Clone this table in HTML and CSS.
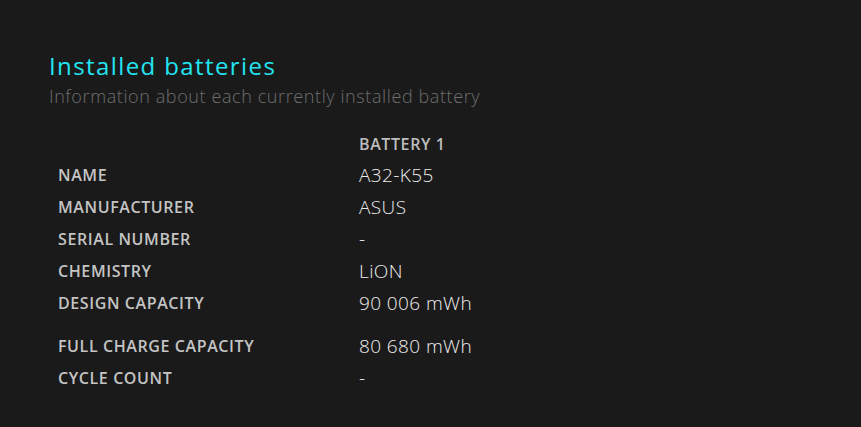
FILE: index.html
```html
<!DOCTYPE html>
<html>
<head>
<meta charset="utf-8">
<link rel="stylesheet" href="styles.css">
</head>
<body>
<main class="page">
  <h1 class="title">Installed batteries</h1>
  <p class="subtitle">Information about each currently installed battery</p>
  <div class="table">
    <div class="row head"><span class="label"></span><span class="colhead">BATTERY 1</span></div>
    <div class="row"><span class="label">NAME</span><span class="value">A32-K55</span></div>
    <div class="row"><span class="label">MANUFACTURER</span><span class="value">ASUS</span></div>
    <div class="row"><span class="label">SERIAL NUMBER</span><span class="value">-</span></div>
    <div class="row"><span class="label">CHEMISTRY</span><span class="value">LiON</span></div>
    <div class="row"><span class="label">DESIGN CAPACITY</span><span class="value">90 006 mWh</span></div>
    <div class="row gap"><span class="label">FULL CHARGE CAPACITY</span><span class="value">80 680 mWh</span></div>
    <div class="row"><span class="label">CYCLE COUNT</span><span class="value">-</span></div>
  </div>
</main>
</body>
</html>
```

FILE: styles.css
```css
html, body {
  margin: 0;
  padding: 0;
  background: #1a1a1a;
  height: 100%;
}
body {
  font-family: "Open Sans", "Noto Sans", sans-serif;
}
.page {
  padding: 49px 0 0 49px;
}
.title {
  margin: 0;
  font-size: 24px;
  font-weight: 400;
  letter-spacing: 1.4px;
  line-height: 34px;
  color: #22e4f2;
}
.subtitle {
  margin: 0;
  font-size: 18px;
  font-weight: 300;
  letter-spacing: 0.6px;
  line-height: 26px;
  color: #6e6e6e;
}
.table {
  display: flex;
  flex-direction: column;
  padding: 19px 0 0 9px;
}
.row {
  display: grid;
  grid-template-columns: 301px auto;
  height: 32px;
  align-items: center;
}
.row.head { height: 31px; }
.row.gap { margin-top: 11px; }
.label {
  font-size: 16px;
  font-weight: 600;
  letter-spacing: 0.6px;
  color: #c4c4c4;
}
.colhead {
  font-size: 16px;
  font-weight: 600;
  letter-spacing: 0.6px;
  color: #bdbdbd;
}
.value {
  font-size: 19px;
  font-weight: 300;
  letter-spacing: 0.4px;
  color: #ededed;
}
```
